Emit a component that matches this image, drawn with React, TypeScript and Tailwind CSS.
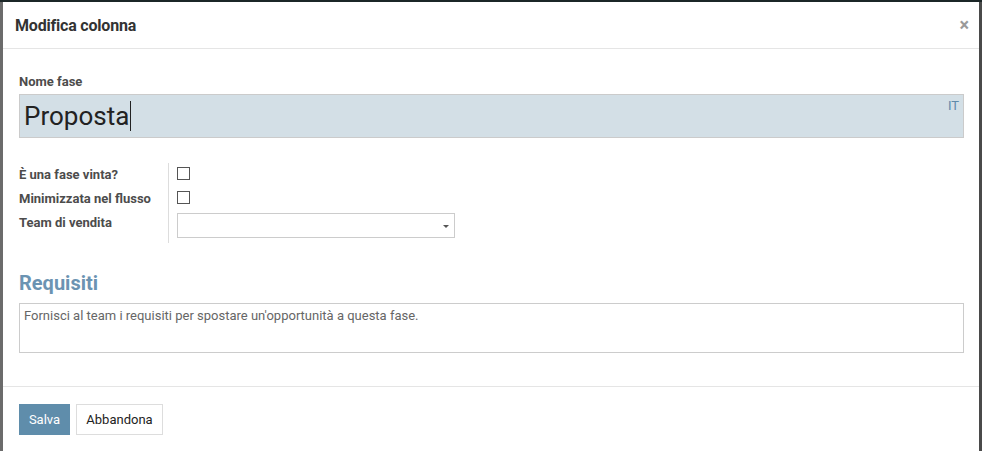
import React from "react";

export default function App() {
  return (
    <div className="w-[982px] h-[451px] overflow-hidden bg-[#1b2627] relative" style={{ fontFamily: "Roboto, 'Liberation Sans', sans-serif" }}>
      <div className="absolute left-0 top-[2px] w-[3px] h-[449px] bg-[#6b6b6b]" />
      <div className="absolute right-0 top-[2px] w-[3px] h-[449px] bg-[#4a4a4a]" />
      <div className="absolute left-[3px] top-[2px] w-[976px] h-[449px] bg-white flex flex-col">
        {/* header */}
        <div className="h-[47px] border-b border-[#e5e5e5] flex items-center justify-between pl-[12px] pr-[10px]">
          <div className="text-[16px] font-bold text-[#333] tracking-[-0.2px] mt-[2px]">Modifica colonna</div>
          <div className="text-[18px] font-bold text-[#9a9a9a] leading-none">×</div>
        </div>
        {/* body */}
        <div className="pl-[16px] pr-[15px] pt-[26px] flex flex-col">
          <div className="text-[13px] font-bold text-[#4c4c4c] leading-[14px]">Nome fase</div>
          <div className="mt-[5px] h-[44px] bg-[#d3dfe6] border border-[#cbcbcb] relative flex items-center pl-[4px]">
            <span className="text-[26px] text-[#222] leading-none">Proposta</span>
            <span className="w-[1px] h-[30px] bg-[#222] ml-[1px]" />
            <span className="absolute right-[4px] top-[1px] text-[13px] text-[#5f8aaa]">IT</span>
          </div>
          <div className="mt-[25px] flex">
            <div className="w-[150px] border-r border-[#ddd] flex flex-col text-[13px] font-bold text-[#4c4c4c]">
              <div className="h-[24px] flex items-center">È una fase vinta?</div>
              <div className="h-[24px] flex items-center">Minimizzata nel flusso</div>
              <div className="h-[24px] flex items-center">Team di vendita</div>
              <div className="h-[8px]" />
            </div>
            <div className="pl-[8px] flex flex-col pt-[3px]">
              <div className="h-[24px] flex items-start">
                <div className="w-[13px] h-[13px] border border-[#555] bg-white mt-[1px]" />
              </div>
              <div className="h-[24px] flex items-start">
                <div className="w-[13px] h-[13px] border border-[#555] bg-white mt-[1px]" />
              </div>
              <div className="w-[278px] h-[25px] border border-[#ccc] relative mt-[-1px]">
                <div className="absolute right-[5px] top-[11px] w-0 h-0 border-l-[3px] border-r-[3px] border-t-[3px] border-l-transparent border-r-transparent border-t-[#555]" />
              </div>
            </div>
          </div>
          <div className="mt-[28px] text-[20px] font-bold text-[#6b93b2] leading-[24px]">Requisiti</div>
          <div className="mt-[8px] h-[50px] border border-[#ccc] px-[4px] pt-[2px] text-[13px] text-[#666]">
            Fornisci al team i requisiti per spostare un'opportunità a questa fase.
          </div>
        </div>
        {/* footer */}
        <div className="mt-[33px] border-t border-[#e5e5e5] pt-[17px] pl-[16px] flex gap-[6px]">
          <div className="h-[31px] w-[51px] bg-[#5f8dab] text-white text-[13px] flex items-center justify-center">Salva</div>
          <div className="h-[31px] w-[87px] border border-[#ddd] text-[#222] text-[13px] flex items-center justify-center">Abbandona</div>
        </div>
      </div>
    </div>
  );
}
